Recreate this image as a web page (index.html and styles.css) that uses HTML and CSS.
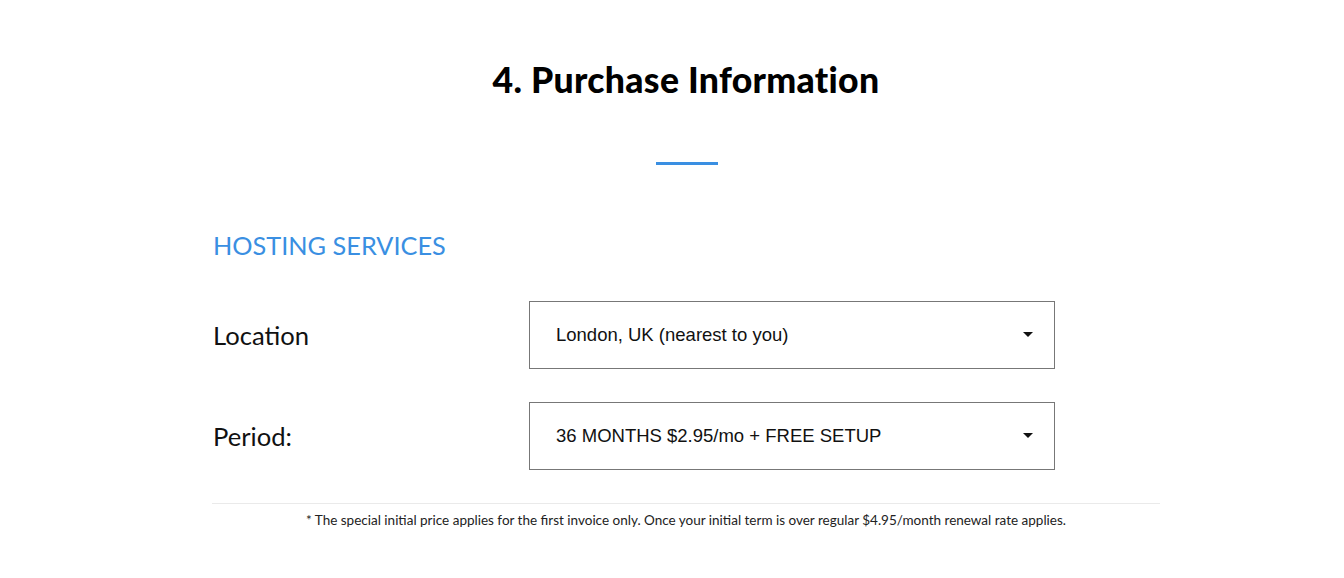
FILE: index.html
```html
<!DOCTYPE html>
<html>
<head>
<meta charset="utf-8">
<link rel="stylesheet" href="styles.css">
</head>
<body>
<div class="page">
  <section class="wrap">
    <h1 class="title">4. Purchase Information</h1>
    <div class="bar"></div>
    <h2 class="section-title">HOSTING SERVICES</h2>
    <div class="row">
      <label class="label">Location</label>
      <div class="select">
        <span class="value">London, UK (nearest to you)</span>
        <span class="caret"></span>
      </div>
    </div>
    <div class="row">
      <label class="label">Period:</label>
      <div class="select">
        <span class="value">36 MONTHS $2.95/mo + FREE SETUP</span>
        <span class="caret"></span>
      </div>
    </div>
    <hr class="rule">
    <p class="note">* The special initial price applies for the first invoice only. Once your initial term is over regular $4.95/month renewal rate applies.</p>
  </section>
</div>
</body>
</html>
```
FILE: styles.css
```css
html, body {
  margin: 0;
  padding: 0;
  background: #fff;
}
body {
  font-family: Lato, "Liberation Sans", sans-serif;
  color: #111;
}
.page {
  padding-left: 212px;
}
.wrap {
  width: 948px;
  padding-top: 58px;
}
.title {
  margin: 0;
  text-align: center;
  font-family: Lato, sans-serif;
  font-weight: 900;
  font-size: 35.6px;
  line-height: 44px;
  color: #000;
  letter-spacing: 0.3px;
}
.bar {
  width: 62px;
  height: 3px;
  background: #3a8fe2;
  margin: 60px auto 0;
  position: relative;
  left: 1px;
}
.section-title {
  margin: 64px 0 0 1px;
  font-weight: 400;
  font-size: 25.3px;
  line-height: 32px;
  color: #3a8fe2;
}
.row {
  display: flex;
  align-items: center;
  margin-top: 40px;
}
.row + .row {
  margin-top: 33px;
}
.label {
  width: 316px;
  padding-left: 1px;
  font-size: 25.6px;
  color: #111;
}
.select {
  height: 66px;
  border: 1px solid #777;
  display: flex;
  align-items: center;
  justify-content: space-between;
  padding: 0 21px 0 26px;
  box-sizing: content-box;
  width: 477px;
}
.value {
  font-family: "Liberation Sans", Arial, sans-serif;
  font-size: 18.5px;
  color: #111;
}
.caret {
  width: 0;
  height: 0;
  border-left: 5px solid transparent;
  border-right: 5px solid transparent;
  border-top: 5px solid #111;
  margin-top: -1px;
}
.rule {
  margin: 33px 0 0;
  border: 0;
  border-top: 1px solid #eaeaea;
}
.note {
  margin: 7px 0 0;
  text-align: center;
  font-size: 13.5px;
  line-height: 18px;
  color: #222;
  padding-left: 0;
}
```
